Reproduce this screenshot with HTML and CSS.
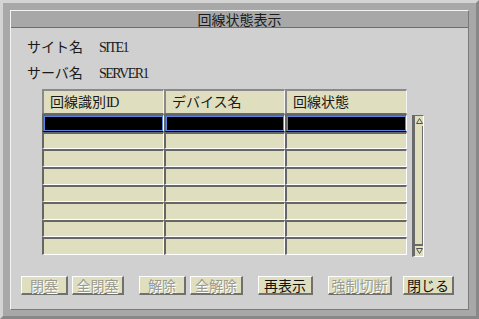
FILE: index.html
```html
<!DOCTYPE html>
<html lang="ja">
<head>
  <meta charset="UTF-8">
  <title>回線状態表示</title>
  <link rel="stylesheet" href="styles.css">
</head>
<body>
  <div class="frame">
    <div class="panel">
      <div class="title">回線状態表示</div>

      <div class="info">
        <div class="info-row"><span class="info-label">サイト名</span><span class="latin">SITE1</span></div>
        <div class="info-row"><span class="info-label">サーバ名</span><span class="latin">SERVER1</span></div>
      </div>

      <div class="list">
        <div class="grid">
          <div class="cell head">回線識別<span class="latin">ID</span></div>
          <div class="cell head">デバイス名</div>
          <div class="cell head">回線状態</div>

          <!-- selected row -->
          <div class="cell is-selected"></div>
          <div class="cell is-selected"></div>
          <div class="cell is-selected"></div>

          <div class="cell"></div><div class="cell"></div><div class="cell"></div>
          <div class="cell"></div><div class="cell"></div><div class="cell"></div>
          <div class="cell"></div><div class="cell"></div><div class="cell"></div>
          <div class="cell"></div><div class="cell"></div><div class="cell"></div>
          <div class="cell"></div><div class="cell"></div><div class="cell"></div>
          <div class="cell"></div><div class="cell"></div><div class="cell"></div>
          <div class="cell"></div><div class="cell"></div><div class="cell"></div>
        </div>

        <div class="scroll">
          <div class="scroll-btn">
            <svg width="7" height="6" viewBox="0 0 7 6"><path d="M3.5 0.5 L6.5 5.5 L0.5 5.5 Z" fill="none" stroke="#505050" stroke-width="1"/></svg>
          </div>
          <div class="scroll-track"></div>
          <div class="scroll-btn scroll-btn-down">
            <svg width="7" height="6" viewBox="0 0 7 6"><path d="M0.5 0.5 L6.5 0.5 L3.5 5.5 Z" fill="none" stroke="#505050" stroke-width="1"/></svg>
          </div>
        </div>
      </div>

      <div class="actions">
        <button class="btn w47" disabled>閉塞</button>
        <button class="btn w52" disabled>全閉塞</button>
        <button class="btn w47 group" disabled>解除</button>
        <button class="btn w53" disabled>全解除</button>
        <button class="btn w55 group">再表示</button>
        <button class="btn w64 group" disabled>強制切断</button>
        <button class="btn w51 group-sm">閉じる</button>
      </div>
    </div>
  </div>
</body>
</html>
```

FILE: styles.css
```css
body {
  margin: 0;
  background-color: #a8a8a8;
  font-family: "Noto Sans CJK JP", sans-serif;
  font-size: 14px;
  color: #1a1a1a;
}
.frame {
  width: 479px;
  height: 319px;
  box-sizing: border-box;
  border: 3px solid;
  border-color: #d4d4d4 #888 #888 #d4d4d4;
  padding: 7px 7px 6px 7px;
}
.panel {
  height: 100%;
  box-sizing: border-box;
  border: 1px solid;
  border-color: #f4f4f4 #7a7a7a #7a7a7a #f4f4f4;
  background-color: #d0d0d0;
  display: flex;
  flex-direction: column;
}
.title {
  height: 16px;
  line-height: 16px;
  background-color: #a8a8a8;
  border-bottom: 1px solid #6e6e6e;
  text-align: center;
}
.latin {
  font-family: "Liberation Serif", serif;
  font-size: 14px;
  letter-spacing: -1.5px;
}
.info {
  padding: 9px 0 0 16px;
  display: flex;
  flex-direction: column;
  gap: 8px;
}
.info-row {
  height: 18px;
  line-height: 18px;
  display: flex;
  align-items: baseline;
}
.info-label {
  width: 72px;
}
.list {
  display: flex;
  align-items: flex-start;
  margin: 8px 0 0 31px;
}
.grid {
  display: grid;
  grid-template-columns: 122px 121px 122px;
  grid-template-rows: 25px repeat(8, 17.625px);
}
.cell {
  box-sizing: border-box;
  background-color: #dfdfbf;
  border-style: solid;
  border-width: 2px 1px 1px 2px;
  border-color: #666 #fff #fff #666;
}
.head {
  border-width: 2px 1px 1px 2px;
  border-color: #8a8a8a #f4f4f4 #6a6a6a #8a8a8a;
  padding-left: 6px;
  line-height: 21px;
  white-space: nowrap;
}
.is-selected {
  background-color: #000;
  border-bottom-color: #000;
  box-shadow: inset 0 0 0 1px #5a86e0;
}
.scroll {
  margin: 26px 0 0 5px;
  width: 12px;
  height: 142px;
  box-sizing: border-box;
  border-style: solid;
  border-width: 1px 1px 1px 3px;
  border-color: #6a6a6a #fff #fff #6a6a6a;
  background-color: #dfdfbf;
  display: flex;
  flex-direction: column;
}
.scroll-btn {
  height: 10px;
  display: flex;
  justify-content: center;
  align-items: center;
}
.scroll-btn svg {
  display: block;
}
.scroll-track {
  flex: 1;
  border-right: 1px solid #6a6a6a;
}
.scroll-btn-down {
  border-top: 2px solid #6a6a6a;
}
.actions {
  display: flex;
  gap: 4px;
  margin: 19px 0 0 10px;
}
.btn {
  height: 19px;
  padding: 0;
  box-sizing: border-box;
  background-color: #dfdfbf;
  border-style: solid;
  border-width: 1px 2px 2px 1px;
  border-color: #fff #707070 #707070 #fff;
  font-family: "Noto Sans CJK JP", sans-serif;
  font-size: 14px;
  line-height: 15px;
  color: #111;
}
.btn:disabled {
  color: #9a9a90;
  text-shadow: 1px 1px 0 #fff;
}
.w47 { width: 47px; }
.w51 { width: 51px; }
.w52 { width: 52px; }
.w53 { width: 53px; }
.w55 { width: 55px; }
.w64 { width: 64px; }
.group { margin-left: 11px; }
.group-sm { margin-left: 7px; }
```
